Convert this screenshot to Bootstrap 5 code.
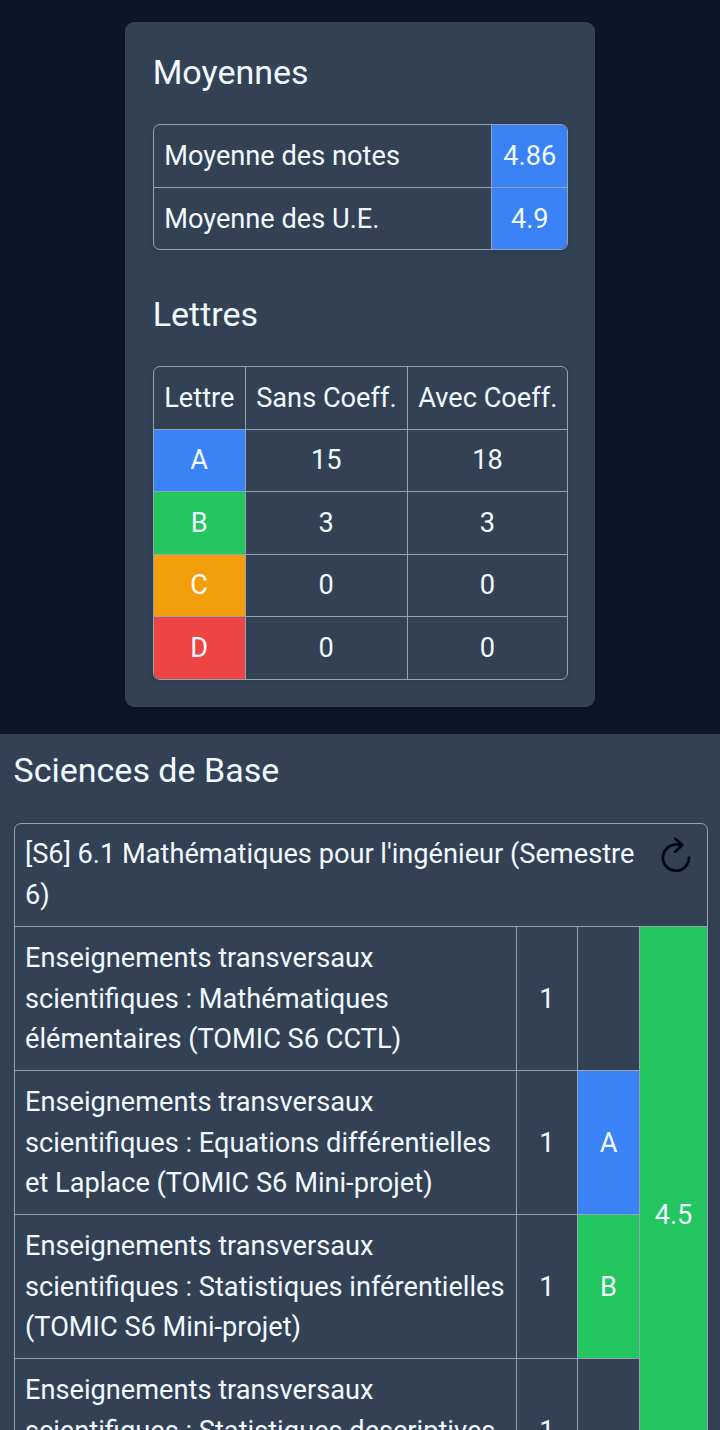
<!DOCTYPE html>
<html lang="fr">
<head>
<meta charset="utf-8">
<meta name="viewport" content="width=device-width, initial-scale=1">
<title>Moyennes</title>
<link href="https://cdn.jsdelivr.net/npm/bootstrap@5.3.0/dist/css/bootstrap.min.css" rel="stylesheet">
<style>
html{overflow:hidden}
body{height:1430px;background:#0d1729;color:#f0f9ff;font-family:Roboto,sans-serif;font-size:27.2px;line-height:40.9px}
.summary{width:470px;margin-top:22px;margin-left:.6px;padding:28px 27px 26.5px 27.4px;background:#334155;border-radius:9px;box-shadow:0 2px 6px rgba(0,0,0,.25)}
h2{font-size:34px;line-height:44px;font-weight:400;margin:0}
.frame{margin-top:30px;border:1px solid #94a3b3;border-radius:7px;overflow:hidden;box-shadow:0 2px 6px rgba(0,0,0,.08)}
.second-title{margin-top:42px}
.grades{width:100%;table-layout:fixed;border-collapse:separate;border-spacing:0}
.grades td,.grades th{height:62px;padding:0 10.5px;font-weight:400;border:0 solid #94a3b3;border-bottom-width:1px;border-right-width:1px;white-space:nowrap}
.grades td:last-child,.grades th:last-child{border-right-width:0}
.grades tr:nth-child(odd)>*{height:63px}
.grades tr:last-child>*{border-bottom-width:0}
.grades tr.last-low>*{height:61px;padding-top:1px}
.grades tr.last-row>*{height:62px}
.grades .course td{height:144px;padding:1px 0 0 10.5px}
.grades .course td+td{padding:1px 0 0 1px;text-align:center}
.grades .heading td{height:103px}
.grades .course td.letter{border-right-width:1px}
.blue{background:#3b82f6}.green{background:#22c55e}.amber{background:#f59e0b}.red{background:#ef4444}
.subject{margin-top:27.5px;padding:14px 12.5px 20px 13.5px;background:#334155}
.w-score{width:75px}.w-letter{width:92px}.w-sans{width:162px}
.w-coef{width:61px}.w-mark{width:62px}.w-ue{width:67px}
.subject .frame{margin-top:31px}
</style>
</head>
<body class="overflow-hidden">
<main class="d-flex flex-column">
<section class="summary align-self-center">
  <h2>Moyennes</h2>
  <div class="frame">
    <table class="grades">
      <colgroup><col><col class="w-score"></colgroup>
      <tr><td>Moyenne des notes</td><td class="blue text-center">4.86</td></tr>
      <tr class="last-low"><td>Moyenne des U.E.</td><td class="blue text-center">4.9</td></tr>
    </table>
  </div>
  <h2 class="second-title">Lettres</h2>
  <div class="frame">
    <table class="grades text-center">
      <colgroup><col class="w-letter"><col class="w-sans"><col></colgroup>
      <tr><th>Lettre</th><th>Sans Coeff.</th><th>Avec Coeff.</th></tr>
      <tr><td class="blue">A</td><td>15</td><td>18</td></tr>
      <tr><td class="green">B</td><td>3</td><td>3</td></tr>
      <tr><td class="amber">C</td><td>0</td><td>0</td></tr>
      <tr class="last-row"><td class="red">D</td><td>0</td><td>0</td></tr>
    </table>
  </div>
</section>
<section class="subject">
  <h2>Sciences de Base</h2>
  <div class="frame">
    <table class="grades">
      <colgroup><col><col class="w-coef"><col class="w-mark"><col class="w-ue"></colgroup>
      <tr class="heading"><td colspan="4" class="text-wrap">
        <div class="d-flex justify-content-between">
          <span>[S6] 6.1 Mathématiques pour l'ingénieur (Semestre 6)</span>
          <svg class="flex-shrink-0" width="42" height="42" viewBox="0 0 42 42" fill="none" stroke="#000814" stroke-width="2.8" stroke-linecap="round" stroke-linejoin="round"><path d="M26.6 10.7H22.1A13 13 0 1 0 34.9 23.7M21.3 4.7L28.2 10.9L21.3 17.8"/></svg>
        </div></td></tr>
      <tr class="course"><td>Enseignements transversaux<br>scientifiques : Mathématiques<br>élémentaires (TOMIC S6 CCTL)</td><td>1</td><td></td><td rowspan="4" class="green">4.5</td></tr>
      <tr class="course"><td>Enseignements transversaux<br>scientifiques : Equations différentielles<br>et Laplace (TOMIC S6 Mini-projet)</td><td>1</td><td class="blue letter">A</td></tr>
      <tr class="course"><td>Enseignements transversaux<br>scientifiques : Statistiques inférentielles<br>(TOMIC S6 Mini-projet)</td><td>1</td><td class="green letter">B</td></tr>
      <tr class="course"><td>Enseignements transversaux<br>scientifiques : Statistiques descriptives<br>(TOMIC S6 Mini-projet)</td><td>1</td><td class="letter"></td></tr>
    </table>
  </div>
</section>
</main>
<script src="https://cdn.jsdelivr.net/npm/bootstrap@5.3.0/dist/js/bootstrap.bundle.min.js"></script>
</body>
</html>
